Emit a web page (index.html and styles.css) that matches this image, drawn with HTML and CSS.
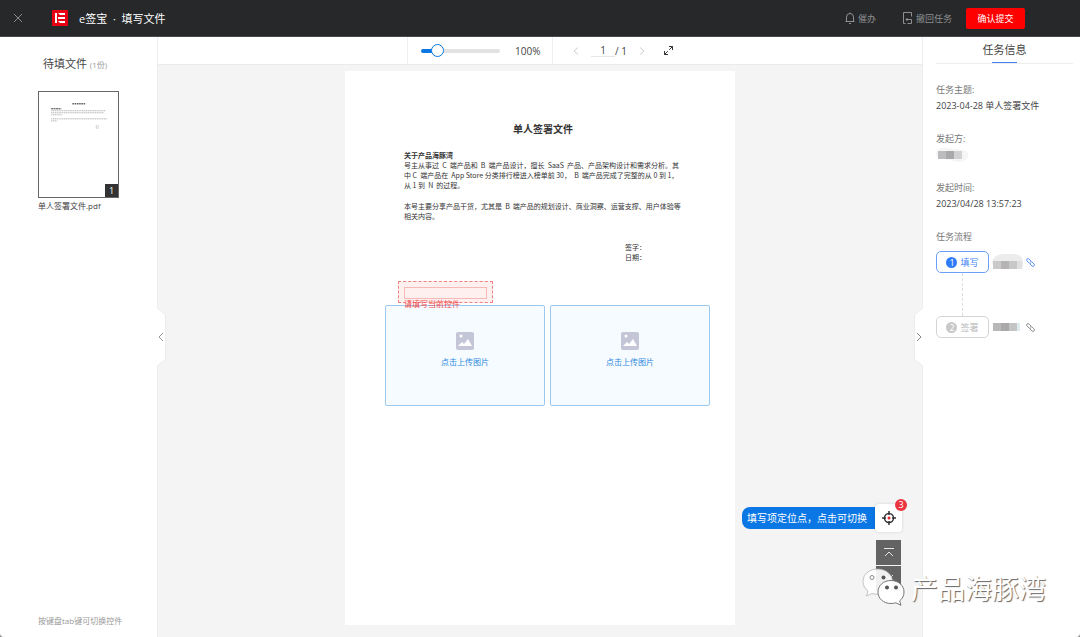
FILE: index.html
```html
<!DOCTYPE html>
<html lang="zh-CN">
<head>
    <meta charset="UTF-8">
    <meta name="viewport" content="width=device-width, initial-scale=1.0">
    <title>e签宝 · 填写文件</title>
    <link rel="stylesheet" href="styles.css">
</head>
<body>
    <div class="app">
        <header class="header">
            <button class="icon-btn close" aria-label="关闭">
                <svg width="10" height="10" viewBox="0 0 10 10"><path d="M1 1l8 8M9 1l-8 8" stroke="#8b8c8d" fill="none"/></svg>
            </button>
            <svg class="logo" width="16" height="16" viewBox="0 0 16 16">
                <rect width="16" height="16" rx="1" fill="#e60012"/>
                <path d="M3 3h2v10H3zM6 3h7v2H8zM6 7h7v2H6zM6 11h7v2H8z" fill="#fff"/>
            </svg>
            <h1 class="title">e签宝 &nbsp;·&nbsp; 填写文件</h1>
            <nav class="actions">
                <button class="action">
                    <svg width="10" height="12" viewBox="0 0 10 12" fill="none" stroke="#8e8f90"><path d="M.5 9.500h9M1.500 9V5a3.500 3.500 0 0 1 7 0v4M4 11.500h2M5 .5v1"/></svg>
                    催办
                </button>
                <button class="action">
                    <svg width="11" height="12" viewBox="0 0 11 12" fill="none" stroke="#8e8f90"><path d="M9.500 4.500v-4h-8v11h2M5.500 11.500h4v-4H4M5.500 6l-1.500 1.500 1.500 1.500"/></svg>
                    撤回任务
                </button>
                <button class="submit">确认提交</button>
            </nav>
        </header>

        <div class="main">
            <aside class="files">
                <h2 class="files-title">待填文件 <small>(1份)</small></h2>
                <a class="file" href="#page1">
                    <span class="thumb">
                        <svg viewBox="0 0 78 104" fill="none" stroke="#999">
                            <path d="M33 11.500h13" stroke="#666" stroke-width="1.500" stroke-dasharray="1.600 .6"/>
                            <path d="M12 16.500h10" stroke="#444" stroke-dasharray="2 .4"/>
                            <path d="M12 18.500h54M12 20.500h52M12 22.500h11M12 26.500h55M12 28.500h6M56 33.500h3M56 35.500h3" stroke-width=".7" stroke-dasharray="1.300 .5"/>
                        </svg>
                        <span class="thumb-no">1</span>
                    </span>
                    <span class="file-name">单人签署文件.pdf</span>
                </a>
                <p class="tip">按键盘tab键可切换控件</p>
                <button class="fold fold-left" aria-label="收起文件列表">
                    <svg width="9" height="58" viewBox="0 0 9 58" fill="none"><path d="M0 0l8 6v46l-8 6z" fill="#fff"/><path d="M.5 .5l8 6v45l-8 6" stroke="#ececec"/><path d="M6 25l-4 4 4 4" stroke="#999"/></svg>
                </button>
            </aside>

            <main class="viewer">
                <div class="toolbar">
                    <div class="zoom">
                        <input class="zoom-range" type="range" min="0" max="100" value="15" aria-label="缩放">
                        <span>100%</span>
                    </div>
                    <div class="pager">
                        <button class="icon-btn" aria-label="上一页"><svg width="6" height="8" viewBox="0 0 6 8"><path d="M5 .5L1 4l4 3.500" stroke="#ccc" fill="none"/></svg></button>
                        <div class="page-no">
                            <input class="page-input" type="text" value="1" aria-label="页码">
                            <span>/ 1</span>
                        </div>
                        <button class="icon-btn" aria-label="下一页"><svg width="6" height="8" viewBox="0 0 6 8"><path d="M1 .5L5 4 1 7.500" stroke="#ccc" fill="none"/></svg></button>
                        <button class="icon-btn full" aria-label="全屏"><svg width="9" height="9" viewBox="0 0 9 9"><path d="M5 .5h3.500V4M8.500 .5L5.200 3.800M.5 5v3.500H4M.5 8.500l3.300-3.300" stroke="#333" fill="none"/></svg></button>
                    </div>
                </div>

                <article class="paper" id="page1">
                    <h2>单人签署文件</h2>
                    <h3>关于产品海豚湾</h3>
                    <p>号主从事过 &nbsp;C &nbsp;端产品和 &nbsp;B &nbsp;端产品设计，擅长 &nbsp;SaaS &nbsp;产品、产品架构设计和需求分析。其<br>中 C &nbsp;端产品在 &nbsp;App Store 分类排行榜进入榜单前 30， &nbsp;B &nbsp;端产品完成了完整的从 0 到 1，<br>从 1 到 &nbsp;N &nbsp;的过程。</p>
                    <p>本号主要分享产品干货，尤其是 &nbsp;B &nbsp;端产品的规划设计、商业洞察、运营支撑、用户体验等<br>相关内容。</p>
                    <p class="sign">签字：<br>日期：</p>

                    <!-- 页面上的填写控件 -->
                    <label class="upload upload-a">
                        <svg width="18" height="18" viewBox="0 0 18 18"><rect width="18" height="18" rx="2" fill="#c4c6d8"/><circle cx="5" cy="4" r="1.500" fill="#fff"/><path d="M2 14l4-4 2 2 4-5 4 7z" fill="#fff"/></svg>
                        点击上传图片
                        <input type="file" class="hidden-file">
                    </label>
                    <label class="upload upload-b">
                        <svg width="18" height="18" viewBox="0 0 18 18"><rect width="18" height="18" rx="2" fill="#c4c6d8"/><circle cx="5" cy="4" r="1.500" fill="#fff"/><path d="M2 14l4-4 2 2 4-5 4 7z" fill="#fff"/></svg>
                        点击上传图片
                        <input type="file" class="hidden-file">
                    </label>
                    <div class="field">
                        <input type="text" id="field1">
                        <label for="field1">请填写当前控件</label>
                    </div>
                </article>

                <div class="locator">
                    <span class="locator-tip">填写项定位点，点击可切换</span>
                    <button class="locator-btn" aria-label="定位">
                        <svg width="14" height="14" viewBox="0 0 14 14" fill="none" stroke="#333"><circle cx="7" cy="7" r="4.500" stroke-width="1.500"/><path d="M7 0v4M7 10v4M0 7h4M10 7h4" stroke-width="1.500"/><circle cx="7" cy="7" r="1.500" fill="#f5222d" stroke="none"/></svg>
                        <span class="badge">3</span>
                    </button>
                </div>
                <div class="jump">
                    <button aria-label="第一页"><svg width="10" height="9" viewBox="0 0 10 9"><path d="M0 .5h10M1 8l4-4 4 4" stroke="#e6e6e6" fill="none"/></svg></button>
                    <button aria-label="最后一页"><svg width="10" height="9" viewBox="0 0 10 9"><path d="M0 8.500h10M1 1l4 4 4-4" stroke="#e6e6e6" fill="none"/></svg></button>
                </div>
            </main>

            <aside class="info">
                <h2 class="info-title"><span>任务信息</span></h2>
                <dl>
                    <dt>任务主题:</dt>
                    <dd>2023-04-28 单人签署文件</dd>
                    <dt>发起方:</dt>
                    <dd>
                        <svg class="mosaic" width="34" height="16" viewBox="0 0 34 16"><path d="M0 5Q2 0 12 1L26 3Q34 4 32 10Q28 17 18 14L3 11Q-1 9 0 5z" fill="#f5f5f6"/><path d="M2 4h8v8H2z" fill="#bcbcbe"/><path d="M10 4h8v8h-8z" fill="#a9a9ab"/><path d="M18 4h8v8h-8z" fill="#d2d2d4"/></svg>
                    </dd>
                    <dt>发起时间:</dt>
                    <dd>2023/04/28 13:57:23</dd>
                    <dt>任务流程</dt>
                </dl>
                <ol class="steps">
                    <li class="step active">
                        <span class="step-box"><b>1</b>填写</span>
                        <svg class="mosaic" width="31" height="16" viewBox="0 0 31 16"><path d="M0 8Q2 0 12 0h10Q31 1 31 8v5l-6 2H2z" fill="#ececec"/><path d="M1 7h8v8H1z" fill="#cacaca"/><path d="M9 7h8v8H9z" fill="#b5b3b3"/><path d="M17 7h8v8h-8z" fill="#c8c8c8"/><path d="M25 7h5v8h-5z" fill="#e0e0e0"/></svg>
                        <a href="#" aria-label="链接"><svg width="9" height="9" viewBox="0 0 9 9"><path d="M5 3L3 1Q2 0 1 1T1 3l2 2Q4 6 5 5M4 6l2 2Q7 9 8 8T8 6L6 4Q5 3 4 4" stroke="currentColor" fill="none" stroke-width=".8"/></svg></a>
                    </li>
                    <li class="step">
                        <span class="step-box"><b>2</b>签署</span>
                        <svg class="mosaic" width="31" height="16" viewBox="0 0 31 16"><path d="M1 4h8v8H1z" fill="#b8b8b8"/><path d="M9 4h8v8H9z" fill="#aaa8a8"/><path d="M17 4h8v8h-8z" fill="#c4c4c4"/><path d="M25 4h3v8h-3z" fill="#dcecef"/></svg>
                        <a href="#" aria-label="链接"><svg width="9" height="9" viewBox="0 0 9 9"><path d="M5 3L3 1Q2 0 1 1T1 3l2 2Q4 6 5 5M4 6l2 2Q7 9 8 8T8 6L6 4Q5 3 4 4" stroke="currentColor" fill="none" stroke-width=".8"/></svg></a>
                    </li>
                </ol>
                <button class="fold fold-right" aria-label="收起任务信息">
                    <svg width="9" height="58" viewBox="0 0 9 58" fill="none"><path d="M9 0L1 6v46l8 6z" fill="#fff"/><path d="M8.500 .5l-8 6v45l8 6" stroke="#ececec"/><path d="M3 25l4 4-4 4" stroke="#888"/></svg>
                </button>
            </aside>
        </div>

        <div class="watermark">
            <svg width="44" height="38" viewBox="0 0 44 38">
                <path d="M15.500 1C7 1 1 6.500 1 13.500c0 4 2 7.500 5 9.500l-1.500 5L10 25.500c2 .6 4 .9 6 .8h3C31 25 30.500 18 30.500 13.500 30.500 6.500 24 1 15.500 1z" fill="#fff" fill-opacity=".9" stroke="#aaa" stroke-width=".7"/>
                <circle cx="10" cy="9.500" r="2" fill="#fff" stroke="#888"/>
                <circle cx="21.500" cy="9.500" r="2" fill="#555"/>
                <path d="M29 12.500c-7.500 0-13 5-13 11.500s5.500 11.500 13 11.500c1.700 0 3.300-.2 4.800-.7l5.200 2.500-1.300-4.500c2.700-2 4.300-5.200 4.300-8.800 0-6.500-5.500-11.500-13-11.500z" fill="#fff" fill-opacity=".96" stroke="#777"/>
                <circle cx="25" cy="19.500" r="2" fill="#555"/>
                <circle cx="34" cy="19.500" r="2" fill="#555"/>
            </svg>
            <span>产品海豚湾</span>
        </div>
    </div>
</body>
</html>
```

FILE: styles.css
```css
* {
    box-sizing: border-box;
}
html {
    background: #8a8a8a;
}
body {
    margin: 0;
    font-family: "Open Sans", "Noto Sans CJK SC", sans-serif;
    font-size: 9px;
    color: #444;
}
h1, h2, h3, p, dl, dd, ol {
    margin: 0;
    padding: 0;
    font-weight: normal;
}
button, input {
    font: inherit;
    color: inherit;
}
button {
    padding: 0;
    border: none;
    background: none;
    cursor: pointer;
}
svg {
    display: block;
    flex: none;
}
a {
    color: inherit;
    text-decoration: none;
}
.app {
    position: relative;
    display: flex;
    flex-direction: column;
    min-height: 100vh;
    background: #fff;
    border-radius: 0 0 4px 4px;
    overflow: hidden;
}

/* 顶部栏 */
.header {
    display: flex;
    align-items: center;
    height: 37px;
    padding: 0 55px 0 13px;
    background: #26282a;
    border-bottom: 1px solid #47494b;
    color: #fff;
}
.logo {
    margin: 0 11px 0 29px;
}
.title {
    font-size: 11px;
}
.actions {
    display: flex;
    align-items: center;
    margin-left: auto;
}
.action {
    display: flex;
    align-items: center;
    gap: 3px;
    margin-right: 26px;
    color: #8e8f90;
}
.action + .action {
    margin-right: 14px;
}
.submit {
    width: 59px;
    height: 21px;
    border-radius: 2px;
    background: #f00;
    color: #fff;
}
.main {
    flex: 1;
    display: grid;
    grid-template-columns: 158px 1fr 158px;
}

/* 左侧文件列表 */
.files {
    position: relative;
    display: flex;
    flex-direction: column;
    padding: 18px 37px 8px 38px;
    border-right: 1px solid #eee;
}
.files-title {
    padding-left: 5px;
    font-size: 11px;
    line-height: 18px;
    white-space: nowrap;
}
.files-title small {
    font-size: 8px;
    color: #999;
}
.file {
    margin-top: 17px;
}
.thumb {
    position: relative;
    display: block;
    width: 81px;
    height: 107px;
    border: 1px solid #666;
}
.thumb-no {
    position: absolute;
    right: 0;
    bottom: 0;
    width: 13px;
    height: 13px;
    background: #333;
    color: #fff;
    line-height: 13px;
    text-align: center;
}
.file-name {
    display: block;
    font-size: 8px;
    line-height: 16px;
}
.tip {
    margin-top: auto;
    font-size: 8px;
    line-height: 16px;
    color: #999;
    white-space: nowrap;
}
.fold {
    position: absolute;
    z-index: 2;
    top: 50%;
    transform: translateY(-50%);
}
.fold-left {
    right: -9px;
}
.fold-right {
    left: -9px;
}

/* 文档区域 */
.viewer {
    position: relative;
    background: #f4f4f4;
}
.toolbar {
    display: flex;
    justify-content: center;
    height: 28px;
    background: #fff;
    border-bottom: 1px solid #ebebeb;
    font-size: 10px;
}
.zoom, .pager, .page-no {
    display: flex;
    align-items: center;
}
.zoom {
    width: 146px;
    gap: 15px;
    padding-left: 13px;
    border: solid #f0f0f0;
    border-width: 0 1px;
}
.zoom-range {
    appearance: none;
    width: 79px;
    height: 4px;
    margin: 0;
    border-radius: 2px;
    background: linear-gradient(to right, #0a77e4 20%, #e2e2e2 20%);
}
.zoom-range::-webkit-slider-thumb {
    appearance: none;
    width: 13px;
    height: 13px;
    border: 1px solid #0a77e4;
    border-radius: 50%;
    background: #fff;
}
.pager {
    padding-left: 20px;
}
.page-no {
    margin: 0 12px;
}
.page-input {
    width: 24px;
    height: 13px;
    padding: 0;
    border: none;
    border-bottom: 1px solid #e6e6e6;
    text-align: center;
}
.full {
    margin-left: 19px;
}
.paper {
    position: relative;
    width: 390px;
    min-height: 554px;
    margin: 6px auto 12px;
    padding: 48px 53px 0 59px;
    background: #fff;
    font-family: "Noto Sans CJK SC", sans-serif;
    font-size: 7px;
    line-height: 10px;
    color: #333;
    white-space: nowrap;
}
.paper h2 {
    margin-bottom: 12px;
    font-size: 10px;
    font-weight: bold;
    line-height: 19px;
    text-align: center;
}
.paper h3 {
    font-size: 7px;
    font-weight: bold;
}
.paper p {
    margin-bottom: 11px;
}
.paper .sign {
    margin-top: 21px;
    padding-left: 221px;
}
.upload {
    position: absolute;
    top: 234px;
    width: 160px;
    height: 101px;
    display: flex;
    flex-direction: column;
    align-items: center;
    gap: 8px;
    padding-top: 26px;
    background: #f6fbff;
    border: 1px solid #9cc7ef;
    border-radius: 2px;
    font-size: 8px;
    line-height: 8px;
    color: #2a87e0;
    cursor: pointer;
}
.upload-a {
    left: 40px;
}
.upload-b {
    left: 205px;
}
.hidden-file {
    display: none;
}
.field {
    position: absolute;
    top: 210px;
    left: 53px;
    width: 95px;
    height: 22px;
    padding: 5px;
    background: #fff0f0;
    border: 1px dashed #f08080;
    font-size: 8px;
    color: #f04b4b;
}
.field input {
    display: block;
    width: 100%;
    height: 12px;
    background: transparent;
    border: 1px solid #f7b8b8;
}

/* 悬浮按钮 */
.locator {
    position: absolute;
    right: 20px;
    bottom: 105px;
    display: flex;
    align-items: center;
}
.locator-tip {
    padding: 0 8px 0 5px;
    background: #0a77e4;
    border-radius: 8px 0 0 8px;
    font-size: 10px;
    line-height: 22px;
    color: #fff;
}
.locator-btn {
    position: relative;
    display: flex;
    align-items: center;
    justify-content: center;
    width: 27px;
    height: 28px;
    background: #fff;
    border-radius: 4px;
    box-shadow: 0 0 3px rgba(0, 0, 0, .15);
}
.badge {
    position: absolute;
    top: -5px;
    right: -5px;
    width: 12px;
    height: 12px;
    border-radius: 50%;
    background: #ea3440;
    font-size: 9px;
    line-height: 12px;
    color: #fff;
}
.jump {
    position: absolute;
    right: 21px;
    bottom: 46px;
    display: grid;
    gap: 1px;
}
.jump button {
    display: grid;
    place-items: center;
    width: 25px;
    height: 25px;
    background: #636363;
}

/* 右侧任务信息 */
.info {
    position: relative;
    padding: 0 7px 0 13px;
    border-left: 1px solid #eee;
}
.info-title {
    display: flex;
    justify-content: center;
    margin-bottom: 18px;
    border-bottom: 1px solid #eee;
    font-size: 11px;
    line-height: 26px;
}
.info-title span {
    background: linear-gradient(#3f83f7, #3f83f7) center bottom / 25px 1px no-repeat;
}
.info dt, .info dd {
    height: 16px;
    line-height: 16px;
    white-space: nowrap;
}
.info dt {
    color: #777;
}
.info dd {
    margin-bottom: 17px;
}
.steps {
    margin-top: 6px;
    padding: 0;
    list-style: none;
}
.step {
    display: flex;
    flex-wrap: wrap;
    align-items: center;
    column-gap: 3px;
    color: #777;
}
/* 步骤之间的虚线 */
.step + .step::before {
    content: "";
    width: 100%;
    height: 43px;
    margin-left: 26px;
    border-left: 1px dashed #ddd;
}
.step.active {
    color: #3f83f7;
}
.step-box {
    display: flex;
    align-items: center;
    justify-content: center;
    gap: 3px;
    width: 53px;
    height: 22px;
    border: 1px solid #d5d5d5;
    border-radius: 5px;
    color: #bbb;
}
.step-box b {
    width: 11px;
    height: 11px;
    border-radius: 50%;
    background: #c8c8c8;
    font-size: 9px;
    font-weight: normal;
    line-height: 11px;
    text-align: center;
    color: #fff;
}
.active .step-box {
    border-color: #6ca1fa;
    color: #3f83f7;
}
.active .step-box b {
    background: #2f7bfa;
    color: #fff;
}

/* 水印 */
.watermark {
    position: absolute;
    z-index: 3;
    right: 34px;
    bottom: 27px;
    display: flex;
    align-items: center;
    gap: 5px;
    font-size: 27px;
    line-height: 40px;
    color: #fff;
    text-shadow: 1px 1px 1px #666;
    pointer-events: none;
}
.watermark svg {
    margin-bottom: 4px;
}
```
